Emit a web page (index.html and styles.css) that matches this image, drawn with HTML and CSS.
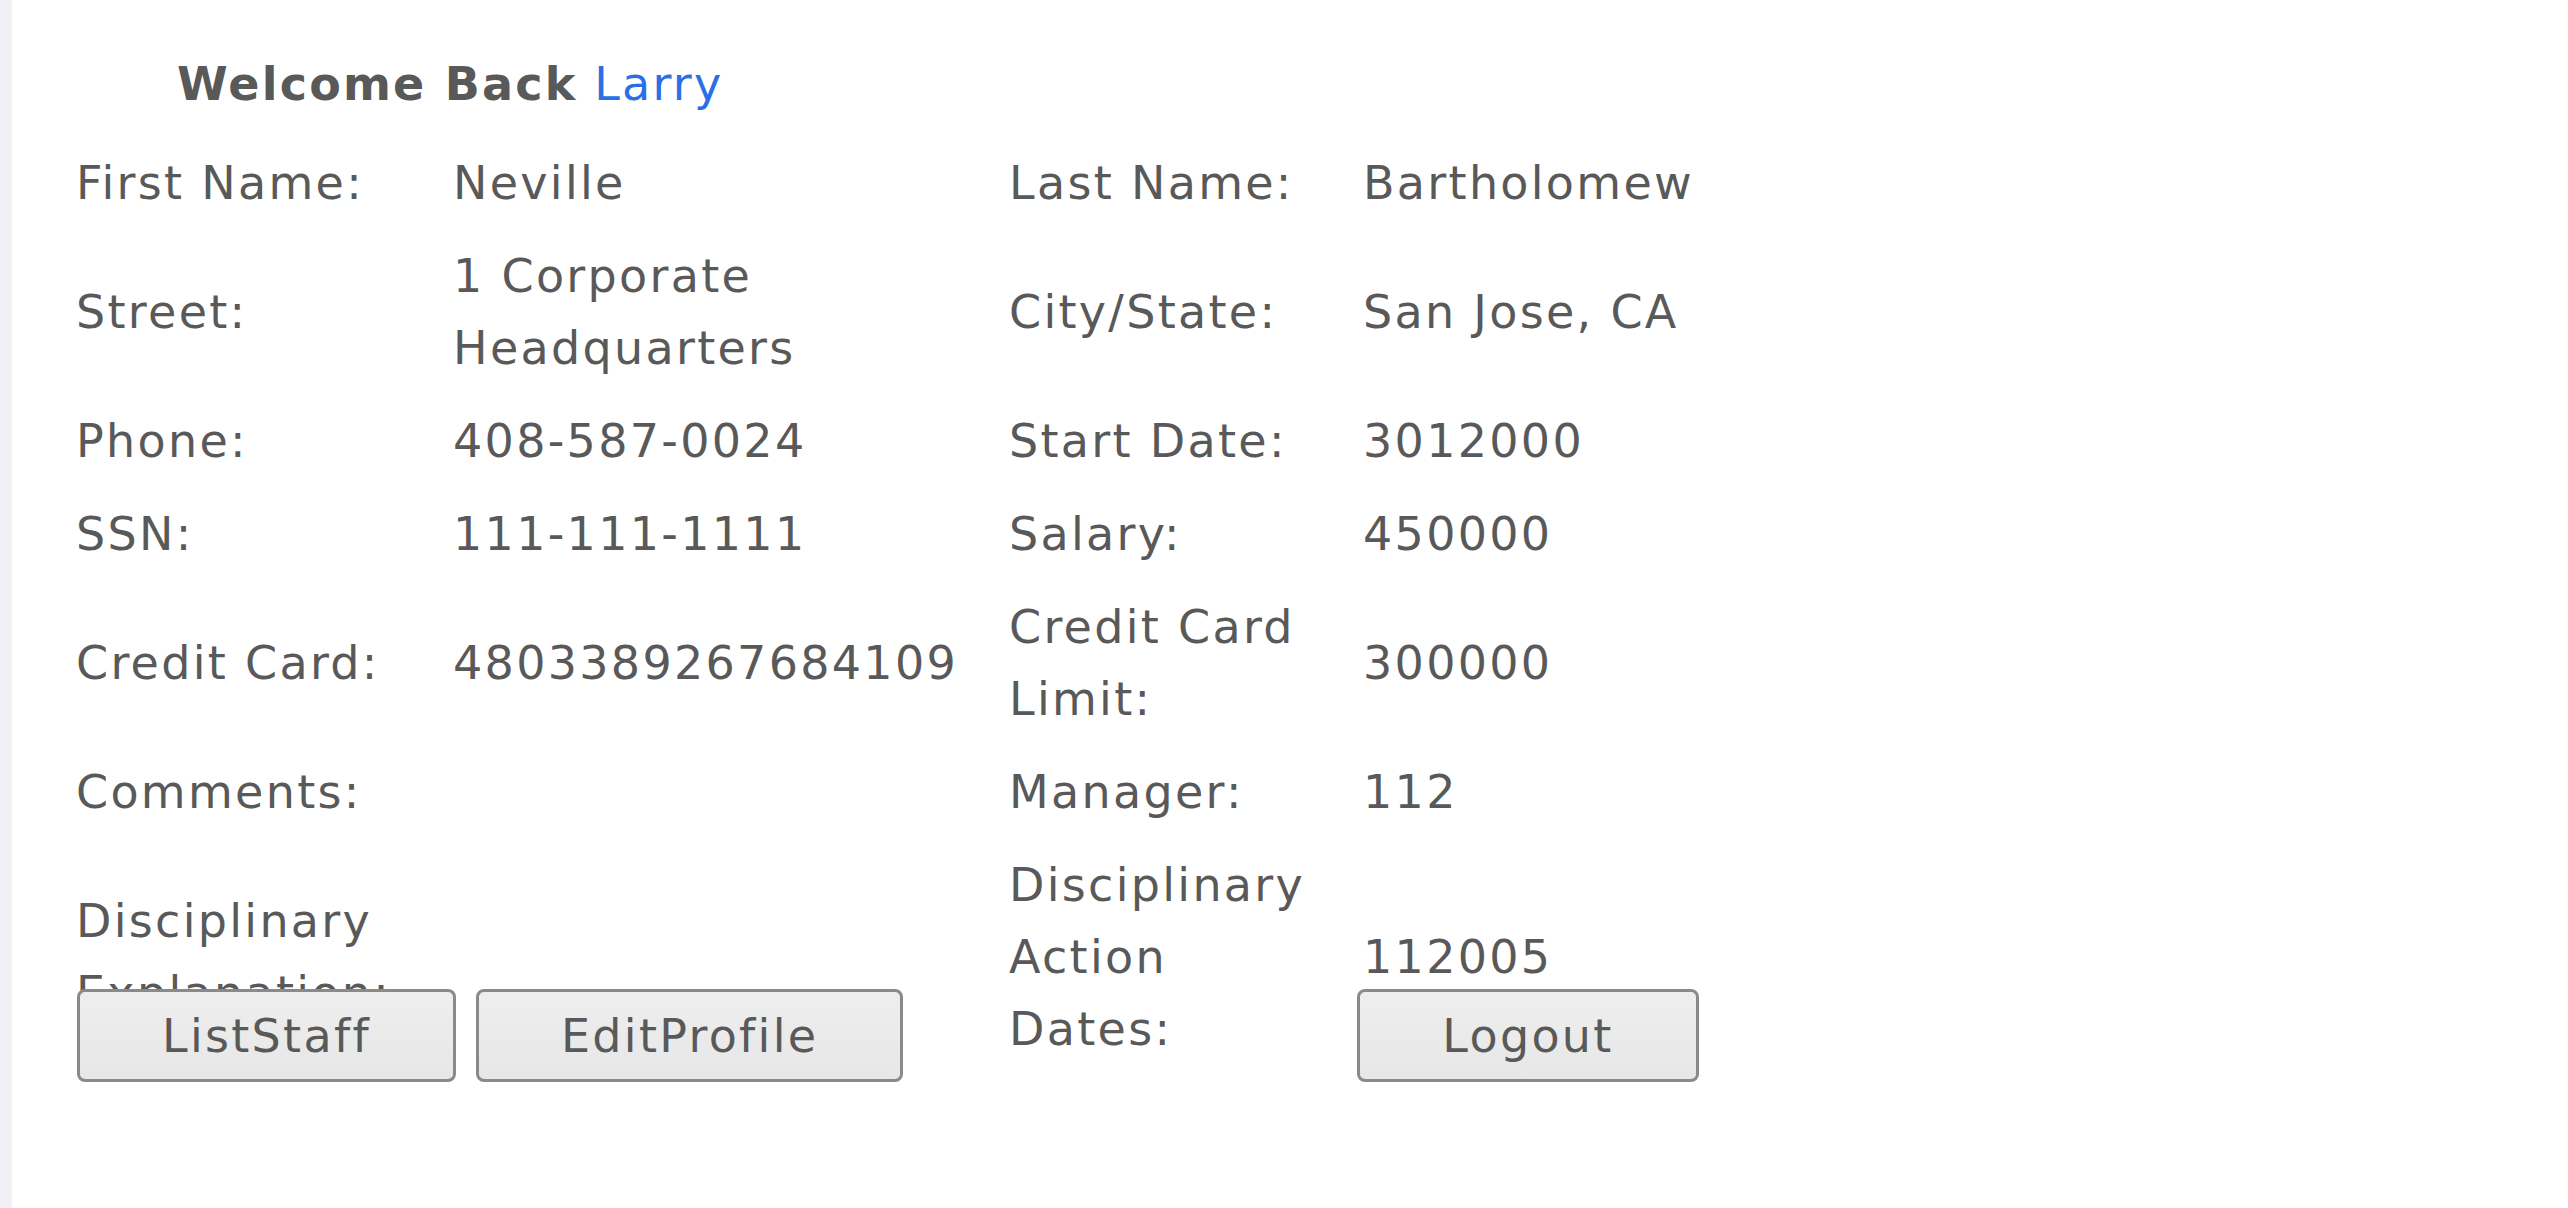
FILE: index.html
```html
<!DOCTYPE html>
<html lang="en">
<head>
<meta charset="utf-8">
<title>Staff Profile</title>
<link rel="stylesheet" href="styles.css">
</head>
<body>
<div class="page">
  <div class="welcome"><span class="welcome-label">Welcome Back</span> <span class="user">Larry</span></div>
  <div class="sheet">
    <table class="profile">
      <colgroup>
        <col class="c-label1">
        <col class="c-value1">
        <col class="c-label2">
        <col class="c-value2">
      </colgroup>
      <tbody>
        <tr><td>First Name:</td><td>Neville</td><td class="label2">Last Name:</td><td>Bartholomew</td></tr>
        <tr><td>Street:</td><td>1 Corporate Headquarters</td><td class="label2">City/State:</td><td>San Jose, CA</td></tr>
        <tr><td>Phone:</td><td>408-587-0024</td><td class="label2">Start Date:</td><td>3012000</td></tr>
        <tr><td>SSN:</td><td>111-111-1111</td><td class="label2">Salary:</td><td>450000</td></tr>
        <tr><td>Credit Card:</td><td>4803389267684109</td><td class="label2">Credit Card Limit:</td><td>300000</td></tr>
        <tr><td>Comments:</td><td></td><td class="label2">Manager:</td><td>112</td></tr>
        <tr><td>Disciplinary Explanation:</td><td></td><td class="label2">Disciplinary Action Dates:</td><td>112005</td></tr>
      </tbody>
    </table>
  </div>
  <div class="actions">
    <button class="btn" type="button">ListStaff</button>
    <button class="btn" type="button">EditProfile</button>
    <button class="btn btn-logout" type="button">Logout</button>
  </div>
</div>
</body>
</html>
```

FILE: styles.css
```css
html, body {
  margin: 0;
  padding: 0;
  background: #ffffff;
}

body {
  font-family: "DejaVu Sans", Verdana, sans-serif;
  color: #595959;
  width: 2568px;
  height: 1208px;
  overflow: hidden;
}

.page {
  box-sizing: border-box;
  height: 1208px;
  border-left: 12px solid #f0f0f6;
  padding: 49px 0 0 64px;
}

.welcome {
  font-size: 46px;
  line-height: 70px;
  letter-spacing: 2.2px;
  padding-left: 101px;
  white-space: nowrap;
}

.welcome-label {
  font-weight: bold;
}

.user {
  color: #2b6fe6;
}

.sheet {
  height: 853px;
  margin-top: 17px;
}

.profile {
  border-collapse: collapse;
  table-layout: fixed;
  width: 1700px;
  font-size: 46px;
  line-height: 72px;
  letter-spacing: 2.3px;
}

.c-label1 { width: 377px; }
.c-value1 { width: 556px; }
.c-label2 { width: 354px; }
.c-value2 { width: 413px; }

.profile td {
  padding: 10.5px 0;
  vertical-align: middle;
  text-align: left;
}

.profile td.label2 {
  padding-right: 44px;
}

.actions {
  position: relative;
  z-index: 1;
  display: flex;
  align-items: flex-start;
  gap: 20px;
  padding-left: 1px;
}

.btn {
  box-sizing: border-box;
  height: 93px;
  padding: 0 82px;
  font-family: "DejaVu Sans", Verdana, sans-serif;
  font-size: 46px;
  letter-spacing: 2.3px;
  color: #595959;
  background: linear-gradient(#eeeeee, #e7e7e7);
  border: 3px solid #8a8a8a;
  border-radius: 8px;
  white-space: nowrap;
}

.btn-logout {
  margin-left: 434px;
}
```
